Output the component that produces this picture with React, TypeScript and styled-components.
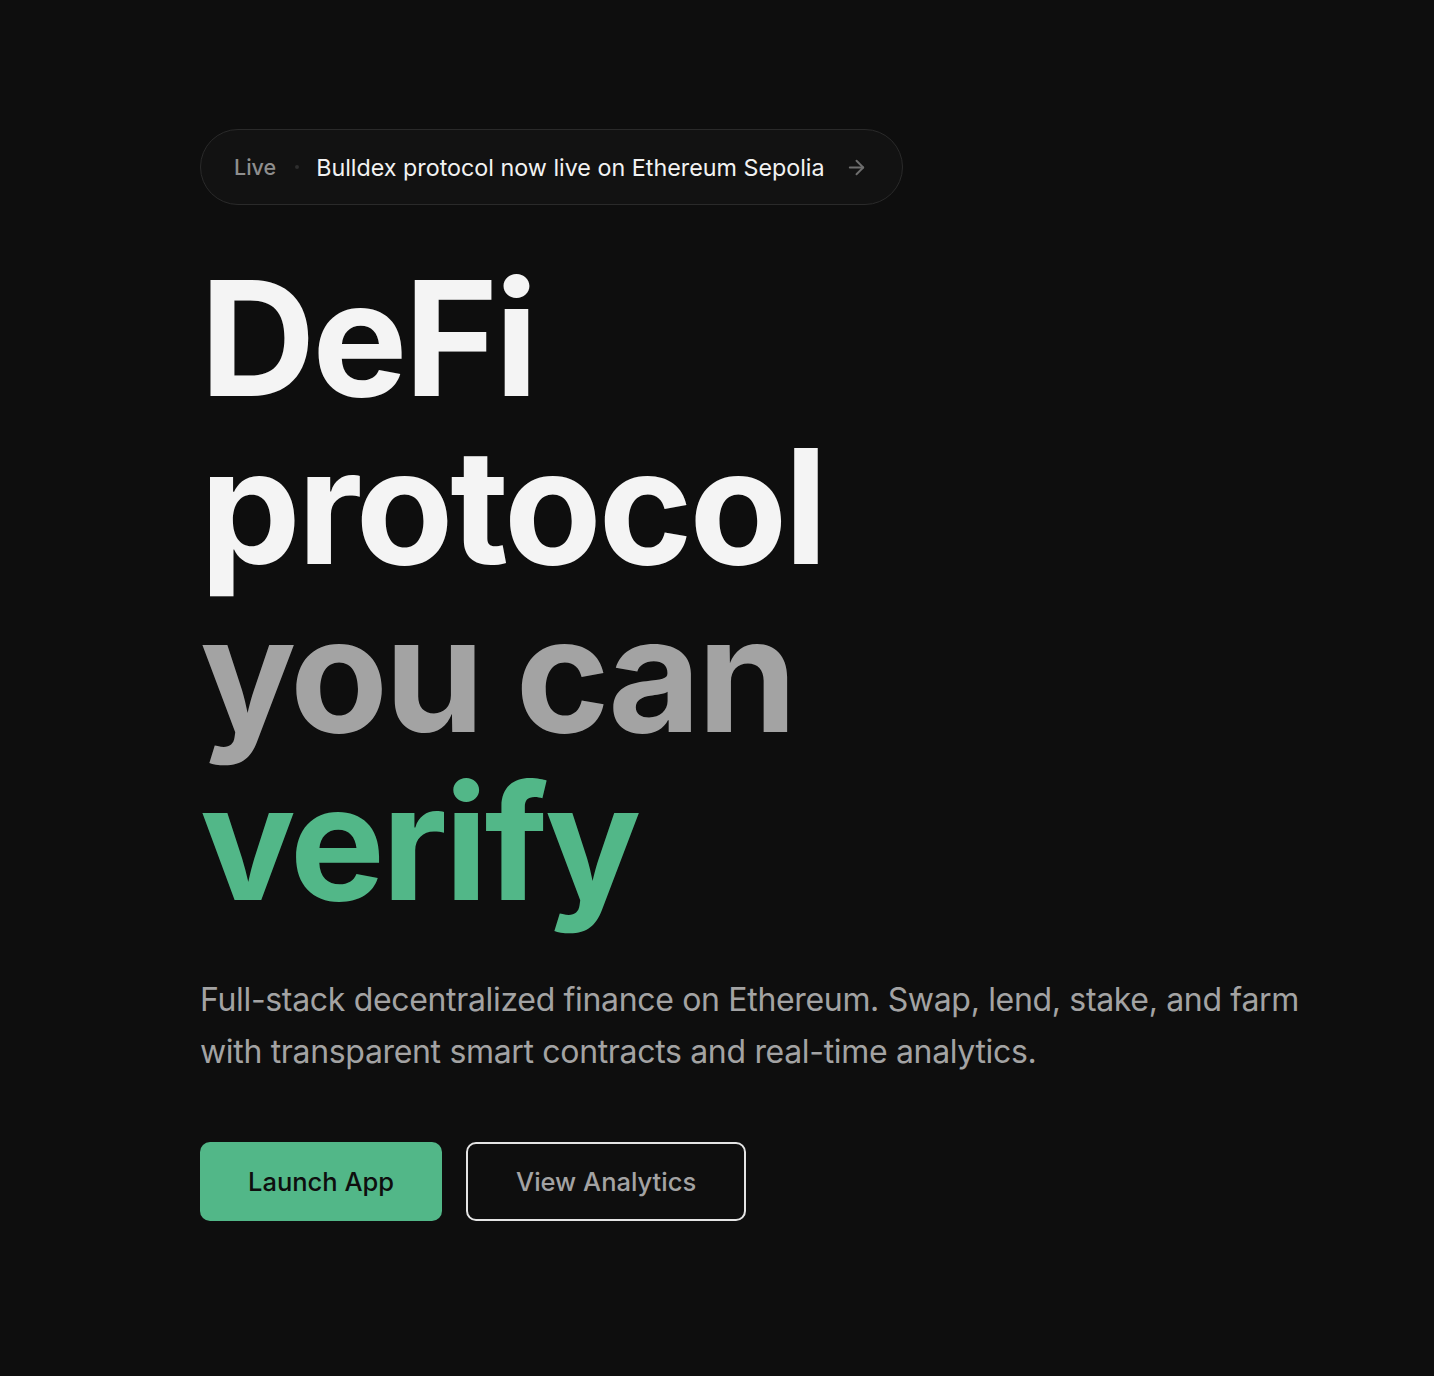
import React from "react";
import styled, { createGlobalStyle } from "styled-components";

const Global = createGlobalStyle`
  html, body { margin: 0; padding: 0; background: #0e0e0e; }
  body { font-family: Inter, "Noto Sans", sans-serif; -webkit-font-smoothing: antialiased; }
  * { box-sizing: border-box; }
`;

const Page = styled.main`
  min-height: 1376px;
  background: #0e0e0e;
  padding: 129px 40px 0 200px;
  display: flex;
  flex-direction: column;
  align-items: flex-start;
`;

const Pill = styled.a`
  display: inline-flex;
  align-items: center;
  height: 76px;
  padding: 0 34px 0 33px;
  border: 1.5px solid #2a2a2a;
  border-radius: 999px;
  background: #121212;
  text-decoration: none;
`;

const LiveTag = styled.span`
  font-size: 21.5px;
  font-weight: 500;
  color: #8e8e8e;
`;

const Dot = styled.span`
  width: 4px;
  height: 4px;
  border-radius: 50%;
  background: #2e2e2e;
  margin: 0 17px 0 19px;
`;

const PillText = styled.span`
  font-size: 23.3px;
  font-weight: 400;
  color: #f2f2f2;
`;

const Arrow = styled.svg`
  margin-left: 20px;
  width: 23px;
  height: 23px;
  color: #6e6e6e;
`;

const Heading = styled.h1`
  margin: 49px 0 0 0;
  font-size: 160px;
  line-height: 168px;
  font-weight: 700;
  letter-spacing: -0.021em;
  color: #f4f4f4;
`;

const Line = styled.span<{ $tone: "white" | "gray" | "green" }>`
  display: block;
  color: ${(p) =>
    p.$tone === "green" ? "#52b788" : p.$tone === "gray" ? "#a3a3a3" : "#f4f4f4"};
`;

const Lead = styled.p`
  margin: 48px 0 0 0;
  max-width: 1115px;
  font-size: 32px;
  line-height: 52px;
  font-weight: 400;
  color: #a3a3a3;
  letter-spacing: -0.33px;
`;

const Actions = styled.div`
  display: flex;
  gap: 24px;
  margin-top: 64px;
`;

const Button = styled.button<{ $primary?: boolean }>`
  height: 79px;
  padding: 0 48px;
  border-radius: 10px;
  font-family: Inter, "Noto Sans", sans-serif;
  font-size: 25.5px;
  font-weight: 500;
  cursor: pointer;
  background: ${(p) => (p.$primary ? "#52b788" : "transparent")};
  color: ${(p) => (p.$primary ? "#0e0e0e" : "#a3a3a3")};
  border: ${(p) => (p.$primary ? "none" : "2px solid #e4e4e4")};
`;

export default function App() {
  return (
    <>
      <Global />
      <Page>
        <Pill href="#">
          <LiveTag>Live</LiveTag>
          <Dot />
          <PillText>Bulldex protocol now live on Ethereum Sepolia</PillText>
          <Arrow viewBox="0 0 24 24" fill="none" stroke="currentColor" strokeWidth="2" strokeLinecap="round" strokeLinejoin="round">
            <path d="M5 12h14" />
            <path d="m12 5 7 7-7 7" />
          </Arrow>
        </Pill>
        <Heading>
          <Line $tone="white">DeFi</Line>
          <Line $tone="white">protocol</Line>
          <Line $tone="gray">you can</Line>
          <Line $tone="green">verify</Line>
        </Heading>
        <Lead>
          Full-stack decentralized finance on Ethereum. Swap, lend, stake, and farm with transparent smart contracts and real-time analytics.
        </Lead>
        <Actions>
          <Button $primary>Launch App</Button>
          <Button>View Analytics</Button>
        </Actions>
      </Page>
    </>
  );
}
